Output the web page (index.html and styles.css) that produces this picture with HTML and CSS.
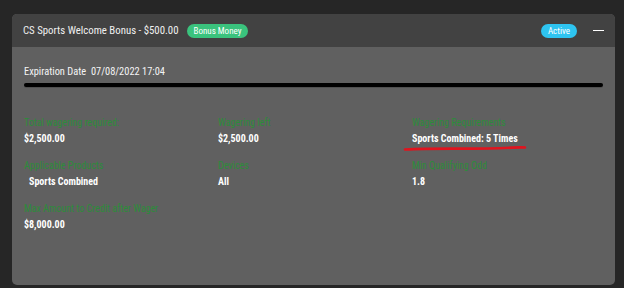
FILE: index.html
```html
<!DOCTYPE html>
<html lang="en">
<head>
    <meta charset="UTF-8">
    <meta name="viewport" content="width=device-width, initial-scale=1.0">
    <title>Bonus - CS Sports</title>
    <link rel="stylesheet" href="styles.css">
</head>
<body>
    <!-- Bonus card -->
    <div class="bonus-card">
        <div class="bonus-header">
            <span class="bonus-title">CS Sports Welcome Bonus - $500.00</span>
            <span class="badge badge-money">Bonus Money</span>
            <span class="spacer"></span>
            <span class="badge badge-active">Active</span>
            <span class="collapse-btn"></span>
        </div>

        <div class="bonus-body">
            <div class="expiry">Expiration Date&nbsp; 07/08/2022 17:04</div>
            <div class="progress"><div class="progress-fill" style="width: 100%"></div></div>

            <div class="details">
                <div class="item">
                    <div class="label">Total wagering required:</div>
                    <div class="value">$2,500.00</div>
                </div>
                <div class="item">
                    <div class="label">Wagering left</div>
                    <div class="value">$2,500.00</div>
                </div>
                <div class="item">
                    <div class="label">Wagering Requirements</div>
                    <div class="value marked">Sports Combined: 5 Times
                        <svg class="scribble" width="124" height="8" viewBox="0 0 124 8">
                            <path d="M2 5.5 C 30 4, 60 5, 85 4.5 S 115 3, 122 3.5" stroke="#e0141e" stroke-width="2.6" fill="none" stroke-linecap="round"/>
                        </svg>
                    </div>
                </div>
                <div class="item">
                    <div class="label">Applicable Products</div>
                    <div class="value indent">Sports Combined</div>
                </div>
                <div class="item">
                    <div class="label">Devices</div>
                    <div class="value">All</div>
                </div>
                <div class="item">
                    <div class="label">Min Qualifying Odd</div>
                    <div class="value">1.8</div>
                </div>
                <div class="item">
                    <div class="label">Max Amount to Credit after Wager</div>
                    <div class="value">$8,000.00</div>
                </div>
            </div>
        </div>
    </div>
</body>
</html>
```

FILE: styles.css
```css
body {
    font-family: Roboto, "Open Sans", sans-serif;
    font-stretch: 75%;
    margin: 0;
    padding: 14px 9px 0 12px;
    background-color: #262626;
    color: #fff;
}

.bonus-card {
    width: 603px;
    height: 271px;
    background-color: #606060;
    border-radius: 5px;
    overflow: hidden;
}

.bonus-header {
    display: flex;
    align-items: center;
    height: 33px;
    padding: 0 11px;
    background-color: #424242;
}

.bonus-title {
    font-size: 10.8px;
    color: #f0f0f0;
}

.spacer {
    flex: 1;
}

.badge {
    display: inline-flex;
    align-items: center;
    height: 14px;
    padding: 0 7px;
    border-radius: 7px;
    font-size: 9px;
    color: #fff;
}

.badge-money {
    margin-left: 8px;
    background-color: #3ac37d;
}

.badge-active {
    background-color: #2ec4f0;
}

.collapse-btn {
    width: 11px;
    height: 1px;
    margin-left: 16px;
    background-color: #fff;
}

.bonus-body {
    padding: 18px 12px 0 12px;
}

.expiry {
    font-size: 10.4px;
    color: #f4f4f4;
    line-height: 13px;
}

.progress {
    margin-top: 5px;
    height: 5px;
    border-radius: 3px;
    background-color: #505050;
}

.progress-fill {
    height: 4px;
    border-radius: 3px;
    background-color: #000;
}

.details {
    display: grid;
    grid-template-columns: 194px 194px 1fr;
    row-gap: 14px;
    margin-top: 28px;
}

.label {
    font-size: 10px;
    line-height: 13px;
    color: #2c8c3a;
}

.value {
    margin-top: 3px;
    font-size: 10px;
    line-height: 13px;
    font-weight: bold;
    color: #fff;
}

.value.indent {
    padding-left: 5px;
}

.marked {
    position: relative;
}

.scribble {
    position: absolute;
    left: -9px;
    top: 12px;
}
```
